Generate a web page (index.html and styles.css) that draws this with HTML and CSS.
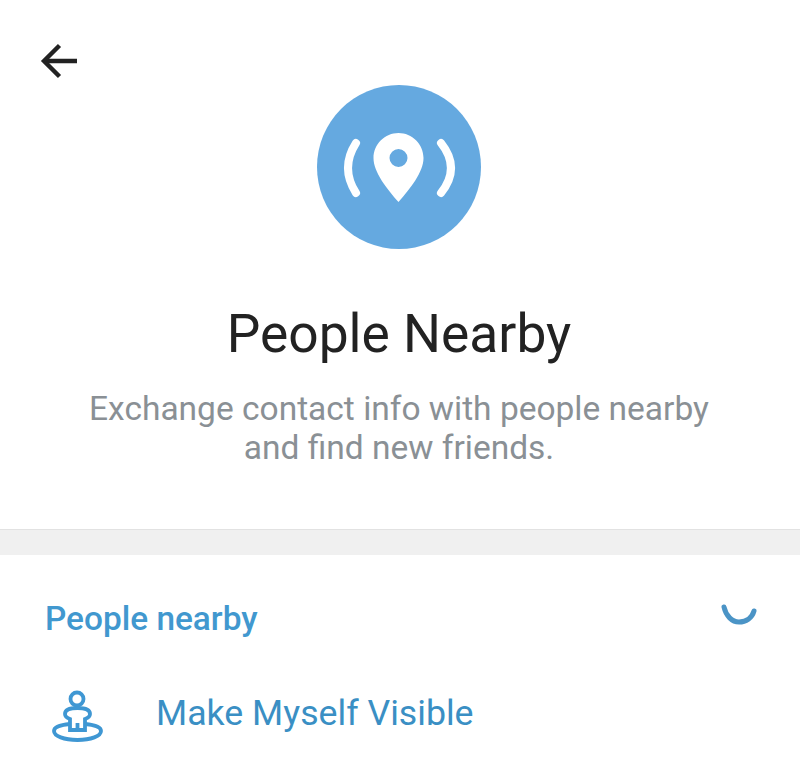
FILE: index.html
```html
<!DOCTYPE html>
<html lang="en">
<head>
    <meta charset="UTF-8">
    <title>People Nearby</title>
    <link rel="stylesheet" href="styles.css">
</head>
<body>
    <header class="intro">
        <button class="back" aria-label="Back">
            <svg width="40" height="40" viewBox="0 0 40 40" fill="none" stroke="#222" stroke-width="4.400">
                <path d="M39 21H6"/>
                <path d="M21.500 5.500L6 21L21.500 36.500"/>
            </svg>
        </button>
        <div class="avatar">
            <svg width="164" height="164" viewBox="0 0 164 164" fill="none">
                <path d="M39 58Q23 83 39 108M124 58Q144 83 124 108" stroke="#fff" stroke-width="8" stroke-linecap="round"/>
                <path fill="#fff" fill-rule="evenodd" d="M81.500 48C95 48 106.500 59 106.500 73C106.500 87 93 104 81.500 117C70 104 56.500 87 56.500 73C56.500 59 68 48 81.500 48ZM81.500 64A9 9 0 1 0 81.500 82A9 9 0 1 0 81.500 64Z"/>
            </svg>
        </div>
        <h1>People Nearby</h1>
        <p>Exchange contact info with people nearby<br>and find new friends.</p>
    </header>
    <div class="band"></div>
    <section class="nearby">
        <div class="nearby-head">
            <h2>People nearby</h2>
            <svg class="spinner" width="40" height="24" viewBox="0 0 40 24" fill="none" stroke="#4b94c6" stroke-width="5" stroke-linecap="round">
                <path d="M4 3C6 12 12 18 19 18C26 18 32 14 34 7"/>
            </svg>
        </div>
        <div class="row">
            <svg width="56" height="54" viewBox="0 0 56 54" fill="none" stroke="#3f97d3" stroke-width="3.800">
                <circle cx="28" cy="10" r="6.500"/>
                <path d="M21 35C10 36 5 38 5 42C5 47 15 51 28.500 51C42 51 52 47 52 42C52 38 47 36 36 35"/>
                <path d="M21 30C18 29 16 27 16 25C16 21 21 19 28.500 19C36 19 41 21 41 25C41 27 39 29 36 30V41H21Z"/>
                <path d="M28.500 34V41"/>
            </svg>
            <span>Make Myself Visible</span>
        </div>
    </section>
</body>
</html>
```

FILE: styles.css
```css
html, body {
    margin: 0;
    height: 768px;
    overflow: hidden;
}
body {
    background: #fff;
    font-family: Roboto, "Liberation Sans", sans-serif;
}
.intro {
    position: relative;
    height: 529px;
    padding: 85px 2px 0 0;
    box-sizing: border-box;
    text-align: center;
}
.back {
    position: absolute;
    left: 38px;
    top: 40px;
    padding: 0;
    border: none;
    background: none;
}
.back svg {
    display: block;
}
.avatar {
    width: 164px;
    height: 164px;
    margin: 0 auto;
    border-radius: 50%;
    background: #65a9e0;
}
.avatar svg {
    display: block;
}
h1 {
    margin: 54px 0 0;
    font-size: 53.300px;
    font-weight: 400;
    line-height: 62px;
    color: #222;
}
p {
    margin: 24px 0 0;
    font-size: 33.500px;
    line-height: 39px;
    color: #8a9095;
}
.band {
    height: 25px;
    background: #f0f0f0;
    border-top: 1px solid #e2e2e2;
}
.nearby {
    padding: 0 42px 0 45px;
}
.nearby-head {
    display: flex;
    justify-content: space-between;
    align-items: center;
    height: 62px;
    margin-top: 32px;
}
h2 {
    margin: 0;
    font-size: 33.400px;
    font-weight: 500;
    color: #4198cf;
}
.spinner {
    margin-right: -2px;
    margin-bottom: 5px;
}
.row {
    display: flex;
    align-items: center;
    gap: 51px;
    margin-top: 34px;
    font-size: 35.700px;
    color: #3a8fc4;
}
.row svg {
    margin: 6px 0 0 4px;
    flex: none;
}
```
